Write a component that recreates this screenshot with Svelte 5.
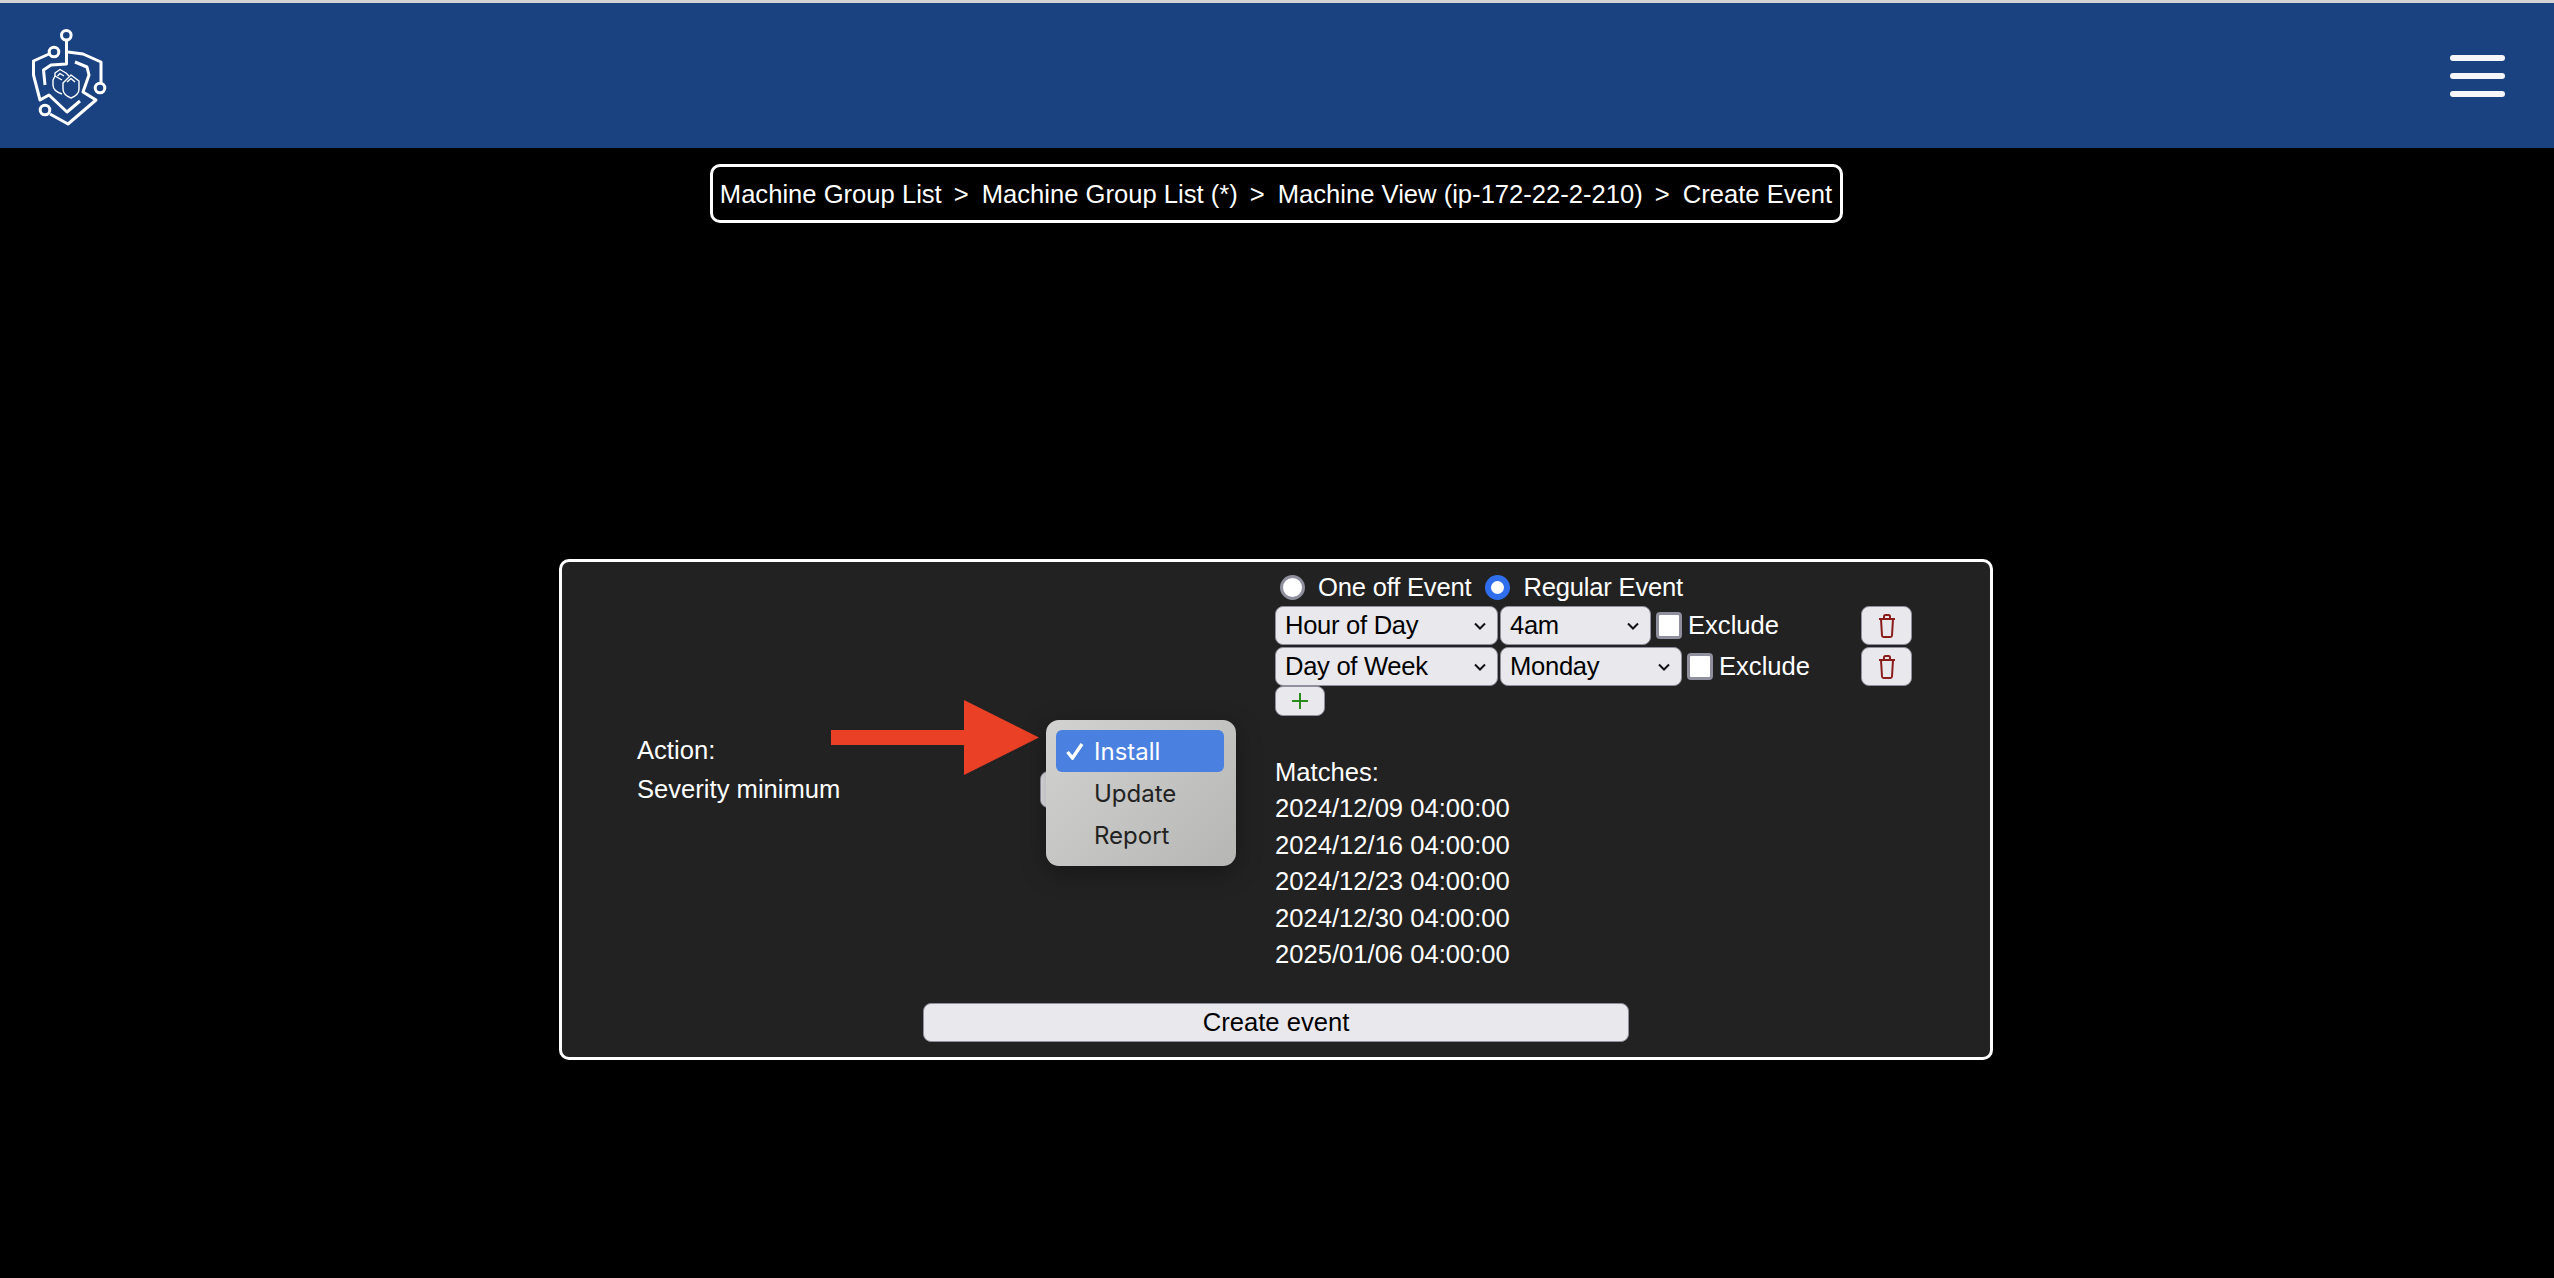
<script>
  const crumbs = [
    "Machine Group List",
    "Machine Group List (*)",
    "Machine View (ip-172-22-2-210)",
    "Create Event",
  ];

  const rules = [
    { unit: "Hour of Day", unitWidth: 223, value: "4am", valueWidth: 151 },
    { unit: "Day of Week", unitWidth: 223, value: "Monday", valueWidth: 182 },
  ];

  const matches = [
    "2024/12/09 04:00:00",
    "2024/12/16 04:00:00",
    "2024/12/23 04:00:00",
    "2024/12/30 04:00:00",
    "2025/01/06 04:00:00",
  ];

  let eventType = $state("regular");
</script>

<header class="topbar">
  <svg class="logo" viewBox="24 20 88 108" width="88" height="108" fill="none" stroke="#fff" stroke-width="3" stroke-linejoin="round">
    <circle cx="66.3" cy="33.3" r="4.8" />
    <circle cx="54" cy="50" r="4.8" />
    <circle cx="100" cy="86" r="4.8" />
    <circle cx="45" cy="108" r="4.8" />
    <path d="M66.5 38V62L51 63L43.5 68L45 83" />
    <path d="M68 50L83 52L101 60V81" />
    <path d="M49 52L33.5 59V73L40 98L49 93L67 110L80 99" />
    <path d="M75 60L87 65L89 73L83 90L96 98L68 122L50 112" />
    <g stroke-width="1.4">
      <path d="M55 75V71L60 67.5L66 71L69 74" />
      <path d="M57.5 74L60 71.5L64 74" />
      <path d="M62 78L55 74L53 78V83C53 87 56 90 62 92" />
      <path d="M63 81L71 73L79 79V87C79 91 76 94 71 96C66 94 63 91 63 87Z" />
      <path d="M67 80L71 76.5L75 80" />
    </g>
  </svg>
  <button class="menu" aria-label="Menu">
    <span></span>
    <span></span>
    <span></span>
  </button>
</header>

<nav class="crumbs">
  <div class="crumb-box">
    {#each crumbs as crumb, i}
      {#if i > 0}<span class="sep">&gt;</span>{/if}
      <span>{crumb}</span>
    {/each}
  </div>
</nav>

<section class="panel">
  <div class="columns">
    <div class="fields">
      <div class="field">
        <span class="field-label">Action:</span>
      </div>
      <div class="field">
        <span class="field-label">Severity minimum</span>
        <div class="select hidden-select"></div>
      </div>
    </div>

    <div class="schedule">
      <div class="radios">
        <label>
          <input type="radio" name="kind" value="once" bind:group={eventType} />
          One off Event
        </label>
        <label>
          <input type="radio" name="kind" value="regular" bind:group={eventType} />
          Regular Event
        </label>
      </div>

      {#each rules as rule}
        <div class="rule">
          <div class="select" style="width: {rule.unitWidth}px">
            {rule.unit}
            <svg class="chevron" viewBox="0 0 12 8" width="12" height="8"><path d="M1 1.5L6 6.5L11 1.5" /></svg>
          </div>
          <div class="select" style="width: {rule.valueWidth}px">
            {rule.value}
            <svg class="chevron" viewBox="0 0 12 8" width="12" height="8"><path d="M1 1.5L6 6.5L11 1.5" /></svg>
          </div>
          <label class="exclude">
            <input type="checkbox" />
            Exclude
          </label>
          <button class="btn trash" aria-label="Delete">
            <svg viewBox="0 0 18 24" width="18" height="24" fill="none" stroke="#8a1c1c" stroke-width="2">
              <path d="M1 5H17" />
              <path d="M6 5V2.5C6 1.7 6.7 1 7.5 1H10.5C11.3 1 12 1.7 12 2.5V5" />
              <path d="M3 5L4 21.5C4.1 22.3 4.7 23 5.5 23H12.5C13.3 23 13.9 22.3 14 21.5L15 5" />
            </svg>
          </button>
        </div>
      {/each}

      <button class="btn plus" aria-label="Add">
        <svg viewBox="0 0 16 16" width="16" height="16" stroke="#2b8a1e" stroke-width="2"><path d="M8 0V16M0 8H16" /></svg>
      </button>

      <div class="matches">
        <div>Matches:</div>
        {#each matches as match}
          <div>{match}</div>
        {/each}
      </div>
    </div>
  </div>

  <button class="btn create">Create event</button>

  <svg class="arrow" viewBox="0 0 208 75" width="208" height="75">
    <path d="M0 30H133V0L208 37.5L133 75V45H0Z" fill="#ea4025" />
  </svg>

  <div class="popup">
    <div class="option active">
      <svg viewBox="0 0 18 18" width="18" height="18" fill="none" stroke="#fff" stroke-width="3.4">
        <path d="M1.5 10L6.5 16L16 2" />
      </svg>
      Install
    </div>
    <div class="option">Update</div>
    <div class="option">Report</div>
  </div>
</section>

<style>
  :global(body) {
    background: #000;
    color: #fff;
    font-family: "Liberation Sans", Arial, sans-serif;
    font-size: 25.6px;
  }

  .topbar {
    height: 145px;
    border-top: 3px solid #d4d4d4;
    background: #1a4280;
    display: flex;
    align-items: center;
    justify-content: space-between;
    padding: 0 49px 0 24px;
  }

  .logo {
    display: block;
  }

  .menu {
    display: flex;
    flex-direction: column;
    gap: 12px;
    padding: 0;
    border: 0;
    background: none;
  }

  .menu span {
    display: block;
    width: 55px;
    height: 6px;
    border-radius: 3px;
    background: #f6f6f8;
  }

  .crumbs {
    display: flex;
    justify-content: center;
    margin: 16px 2px 0 0;
  }

  .crumb-box {
    width: 1133px;
    height: 59px;
    box-sizing: border-box;
    border: 3px solid #fff;
    border-radius: 10px;
    padding-top: 1px;
    display: flex;
    align-items: center;
    justify-content: center;
    white-space: nowrap;
  }

  .sep {
    margin: 0 13px 0 12px;
  }

  .panel {
    position: relative;
    box-sizing: border-box;
    width: 1434px;
    height: 501px;
    margin: 336px 0 0 559px;
    border: 3px solid #fff;
    border-radius: 10px;
    background: #222;
    padding: 4px 0 0 75px;
  }

  .columns {
    display: flex;
    align-items: center;
  }

  .fields {
    width: 638px;
    padding-top: 1px;
  }

  .field {
    display: flex;
    align-items: center;
    height: 39px;
  }

  .field-label {
    width: 403px;
  }

  .select {
    position: relative;
    box-sizing: border-box;
    height: 39px;
    padding-left: 9px;
    display: flex;
    align-items: center;
    flex-shrink: 0;
    background: #e9e9ed;
    border: 1.5px solid #8f8f9d;
    border-radius: 8px;
    color: #000;
    letter-spacing: -0.3px;
  }

  .hidden-select {
    width: 120px;
    height: 37px;
  }

  .chevron {
    position: absolute;
    right: 11px;
    top: 15px;
    fill: none;
    stroke: #111;
    stroke-width: 2;
  }

  .schedule {
    width: 637px;
  }

  .radios {
    display: flex;
    height: 40px;
    align-items: center;
    padding: 2px 0 0 5px;
    box-sizing: border-box;
    gap: 14px;
    letter-spacing: -0.2px;
  }

  .radios label {
    display: flex;
    align-items: center;
  }

  input[type="radio"] {
    appearance: none;
    box-sizing: border-box;
    width: 25px;
    height: 25px;
    margin: 0 13px 0 0;
    border-radius: 50%;
    border: 3px solid #8f8f9d;
    background: #fff;
  }

  input[type="radio"]:checked {
    border: 6px solid #2f6fed;
  }

  .rule {
    display: flex;
    align-items: center;
    gap: 2px;
    height: 39px;
    margin-bottom: 2px;
  }

  .exclude {
    display: flex;
    align-items: center;
    margin-left: 3px;
  }

  input[type="checkbox"] {
    appearance: none;
    box-sizing: border-box;
    width: 26px;
    height: 27px;
    margin: 0 6px 0 0;
    border: 3px solid #8f8f9d;
    border-radius: 4px;
    background: #fff;
  }

  .btn {
    box-sizing: border-box;
    padding: 0;
    background: #e9e9ed;
    border: 1.5px solid #8f8f9d;
    border-radius: 8px;
    color: #000;
    font: inherit;
    display: flex;
    align-items: center;
    justify-content: center;
  }

  .trash {
    width: 51px;
    height: 39px;
    margin-left: auto;
  }

  .plus {
    width: 50px;
    height: 30px;
    margin-top: -2px;
  }

  .matches {
    margin-top: 38px;
    line-height: 36.4px;
  }

  .create {
    width: 706px;
    height: 39px;
    margin: 31px 0 0 286px;
  }

  .arrow {
    position: absolute;
    left: 269px;
    top: 138px;
  }

  .popup {
    position: absolute;
    left: 484px;
    top: 158px;
    width: 190px;
    height: 146px;
    box-sizing: border-box;
    padding: 10px 12px 0 10px;
    border-radius: 13px;
    background: linear-gradient(135deg, #d2d2d0, #b6b6b4);
    box-shadow: 0 6px 24px rgba(0, 0, 0, 0.35);
    color: #222;
    font-family: Inter, "Liberation Sans", sans-serif;
    font-size: 24px;
  }

  .option {
    position: relative;
    height: 42px;
    padding-left: 38px;
    display: flex;
    align-items: center;
  }

  .active {
    background: #4a81e0;
    border-radius: 6px;
    color: #fff;
  }

  .active svg {
    position: absolute;
    left: 10px;
    top: 12px;
  }
</style>
